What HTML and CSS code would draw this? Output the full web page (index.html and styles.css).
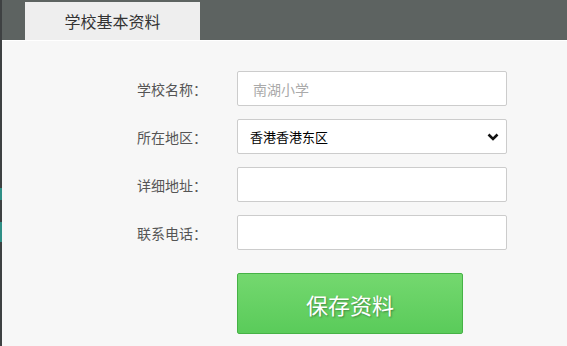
FILE: index.html
```html
<!DOCTYPE html>
<html lang="zh-CN">
<head>
  <meta charset="UTF-8" />
  <title>学校基本资料</title>
  <link rel="stylesheet" href="styles.css">
</head>
<body>
  <div id="page">
    <div class="side-strip"></div>
    <div class="main">
      <div class="tab-bar">
        <div class="tab">学校基本资料</div>
      </div>

      <form class="school-form" onsubmit="return false">
        <div class="form-row">
          <label class="form-label" for="school">学校名称：</label>
          <input type="text" id="school" class="form-input" placeholder="南湖小学" />
        </div>
        <div class="form-row">
          <label class="form-label" for="area">所在地区：</label>
          <div class="select-wrap">
            <select id="area" class="form-input form-select">
              <option>香港香港东区</option>
            </select>
            <svg class="chevron" width="12" height="8" viewBox="0 0 12 8">
              <path d="M1.5 1.5 L6 6 L10.5 1.5" fill="none" stroke="#111" stroke-width="2.6" />
            </svg>
          </div>
        </div>
        <div class="form-row">
          <label class="form-label" for="address">详细地址：</label>
          <input type="text" id="address" class="form-input" />
        </div>
        <div class="form-row">
          <label class="form-label" for="phone">联系电话：</label>
          <input type="text" id="phone" class="form-input" />
        </div>
        <div class="form-row btn-row">
          <span class="form-label"></span>
          <button class="save-btn">保存资料</button>
        </div>
      </form>
    </div>
  </div>
</body>
</html>
```

FILE: styles.css
```css
* {
  box-sizing: border-box;
  margin: 0;
  padding: 0;
}

html, body {
  height: 100%;
  font-family: "Noto Sans CJK SC", "Liberation Sans", sans-serif;
  background: #f7f7f7;
  overflow: hidden;
}

#page {
  height: 100%;
  display: flex;
}

.side-strip {
  width: 2px;
  flex-shrink: 0;
  background: linear-gradient(to bottom,
    #3e4142 0, #3e4142 188px,
    #2f8f86 188px, #2f8f86 200px,
    #3e4142 200px, #3e4142 222px,
    #2f8f86 222px, #2f8f86 242px,
    #3e4142 242px);
}

.main {
  flex: 1;
  display: flex;
  flex-direction: column;
}

.tab-bar {
  height: 41px;
  background: #5d6361;
  padding: 2px 0 0 23px;
  border-bottom: 1px solid #ffffff;
}

.tab {
  width: 175px;
  height: 38px;
  background: #eeeeee;
  color: #333;
  font-size: 16px;
  line-height: 38px;
  text-align: center;
}

.school-form {
  display: flex;
  flex-direction: column;
  gap: 13px;
  padding-top: 30px;
}

.form-row {
  display: flex;
  align-items: center;
}

.form-label {
  width: 235px;
  padding-right: 30px;
  text-align: right;
  font-size: 14px;
  color: #555;
  flex-shrink: 0;
}

.form-input {
  width: 270px;
  height: 35px;
  border: 1px solid #cccccc;
  border-radius: 2px;
  background: #ffffff;
  font-family: inherit;
  font-size: 14px;
  padding: 0 15px;
  color: #222;
  outline: none;
}

.form-input::placeholder {
  color: #aaaaaa;
}

.select-wrap {
  position: relative;
}

.form-select {
  appearance: none;
  -webkit-appearance: none;
  padding: 0 12px;
  font-size: 13px;
  color: #000;
}

.chevron {
  position: absolute;
  right: 8px;
  top: 14px;
  pointer-events: none;
}

.btn-row {
  margin-top: 10px;
}

.save-btn {
  width: 226px;
  height: 61px;
  border: 1px solid #46b246;
  border-radius: 2px;
  background: linear-gradient(to bottom, #74d86f, #5acb5a);
  color: #ffffff;
  font-family: inherit;
  font-size: 22px;
  text-shadow: 1px 1px 2px rgba(0,0,0,0.35);
  cursor: pointer;
}

.save-btn:hover {
  background: #55c455;
}
```
